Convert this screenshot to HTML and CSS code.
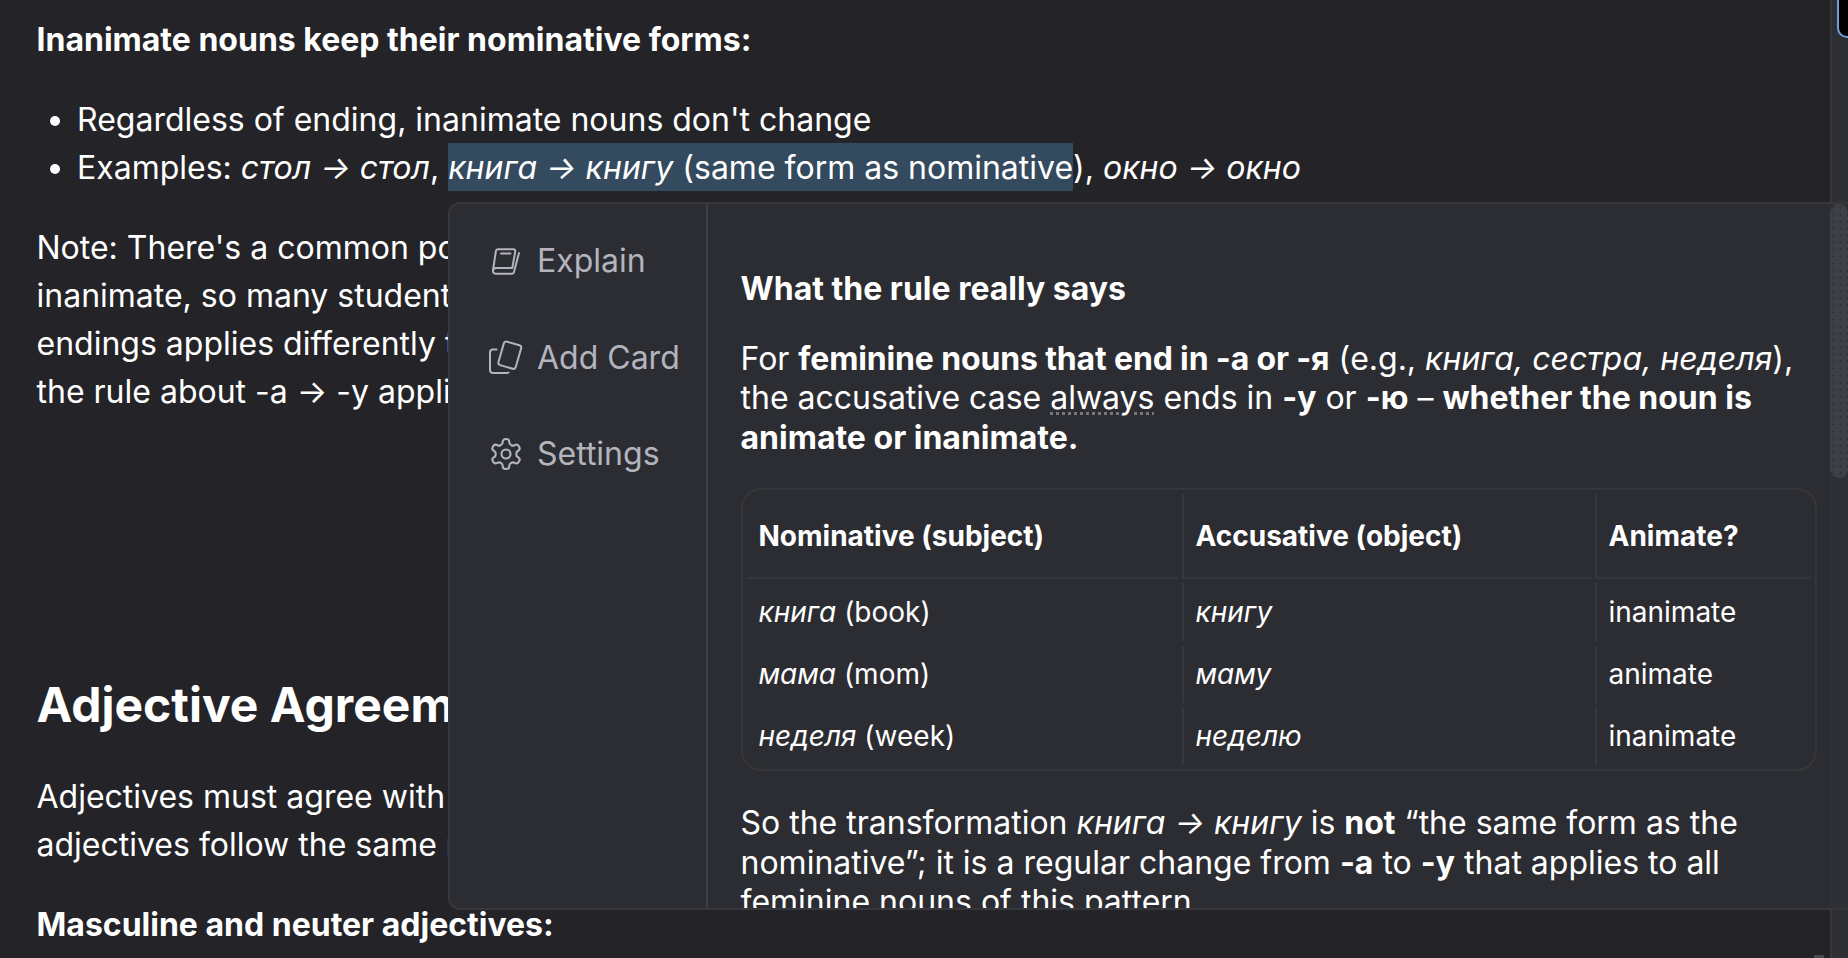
FILE: index.html
```html
<!DOCTYPE html>
<html lang="en">
<head>
<meta charset="UTF-8">
<title>Lesson notes</title>
<link rel="stylesheet" href="styles.css">
</head>
<body>
<div class="page">
    <main class="lesson">
        <p><strong>Inanimate nouns keep their nominative forms:</strong></p>
        <ul>
            <li>Regardless of ending, inanimate nouns don't change</li>
            <li>Examples: <em>стол → стол</em>, <mark><em>книга → книгу</em> (same form as nominative</mark>), <em>окно → окно</em></li>
        </ul>
        <p>Note: There's a common point of<br>inanimate, so many students<br>endings applies differently to<br>the rule about -а → -у applies</p>
        <h2>Adjective Agreement</h2>
        <p>Adjectives must agree with the<br>adjectives follow the same rules</p>
        <p><strong>Masculine and neuter adjectives:</strong></p>
    </main>
    <div class="page-track"><div class="page-thumb"></div></div>
</div>

<section class="popup">
    <nav class="popup-menu">
        <a class="menu-item">
            <svg viewBox="0 0 36 36" width="36" height="36" fill="none" stroke="currentColor" stroke-width="2" stroke-linejoin="round" stroke-linecap="round">
                <path d="M10 6.300h15.500a1.800 1.800 0 0 1 1.800 2.100L24.300 25H8.300a3.300 3.300 0 0 0-3.400 3L7.900 8a2 2 0 0 1 2.100-1.700z"/>
                <path d="M4.900 28a2.800 2.800 0 0 0 2.900 2.700h16.400a1.800 1.800 0 0 0 1.700-1.400L31 10"/>
                <path d="M13 10.500h9.500"/>
            </svg>
            Explain
        </a>
        <a class="menu-item">
            <svg viewBox="0 0 36 36" width="36" height="36" fill="none" stroke="currentColor" stroke-width="2" stroke-linejoin="round" stroke-linecap="round">
                <rect x="12.800" y="3" width="18" height="24.400" rx="2.500" transform="rotate(16 21.800 15.200)"/>
                <path d="M8.500 9.500H5a3 3 0 0 0-3 3V30a3 3 0 0 0 3 3h14a3 3 0 0 0 1.500-.5"/>
            </svg>
            Add Card
        </a>
        <a class="menu-item">
            <svg viewBox="0 0 24 24" width="36" height="36" fill="none" stroke="currentColor" stroke-width="1.400" stroke-linejoin="round" stroke-linecap="round">
                <path d="M12.220 2h-.440a2 2 0 0 0-2 2v.180a2 2 0 0 1-1 1.730l-.430.250a2 2 0 0 1-2 0l-.150-.080a2 2 0 0 0-2.730.730l-.220.380a2 2 0 0 0 .730 2.730l.150.100a2 2 0 0 1 1 1.720v.510a2 2 0 0 1-1 1.740l-.150.090a2 2 0 0 0-.730 2.730l.220.380a2 2 0 0 0 2.730.730l.150-.080a2 2 0 0 1 2 0l.430.250a2 2 0 0 1 1 1.730V20a2 2 0 0 0 2 2h.440a2 2 0 0 0 2-2v-.180a2 2 0 0 1 1-1.730l.430-.250a2 2 0 0 1 2 0l.150.080a2 2 0 0 0 2.730-.730l.220-.390a2 2 0 0 0-.730-2.730l-.150-.080a2 2 0 0 1-1-1.740v-.500a2 2 0 0 1 1-1.740l.150-.090a2 2 0 0 0 .730-2.730l-.220-.380a2 2 0 0 0-2.730-.730l-.150.080a2 2 0 0 1-2 0l-.430-.250a2 2 0 0 1-1-1.730V4a2 2 0 0 0-2-2z"/>
                <circle cx="12" cy="12" r="3"/>
            </svg>
            Settings
        </a>
    </nav>
    <div class="popup-body">
        <h3>What the rule really says</h3>
        <p>For <strong class="tight">feminine nouns that end in -a or -я</strong> (e.g., <em>книга, сестра, неделя</em>), the accusative case <span class="dotted">always</span> ends in <strong>-y</strong> or <strong>-ю</strong> – <strong>whether the noun is animate or inanimate.</strong></p>
        <div class="table-box">
            <table>
                <tr><th>Nominative (subject)</th><th>Accusative (object)</th><th>Animate?</th></tr>
                <tr><td><em>книга</em> (book)</td><td><em>книгу</em></td><td>inanimate</td></tr>
                <tr><td><em>мама</em> (mom)</td><td><em>маму</em></td><td>animate</td></tr>
                <tr><td><em>неделя</em> (week)</td><td><em>неделю</em></td><td>inanimate</td></tr>
            </table>
        </div>
        <p>So the transformation <em>книга → книгу</em> is <strong>not</strong> “the same form as the nominative”; it is a regular change from <strong>-a</strong> to <strong>-y</strong> that applies to all feminine nouns of this pattern.</p>
    </div>
    <div class="popup-track"><div class="popup-thumb"></div></div>
</section>
<div class="corner-mark"></div>
</body>
</html>
```
FILE: styles.css
```css
/* page */
html, body {
    margin: 0;
    height: 100%;
    overflow: hidden;
}
body {
    background-color: #242428;
    color: #fff;
    font-family: Inter, "Noto Sans", sans-serif;
    font-size: 32px;
    line-height: 48px;
    position: relative;
}
.page {
    display: flex;
    height: 958px;
}
.lesson {
    flex: 1;
    min-width: 0;
    padding: 15.500px 37px 0 36.500px;
    overflow: hidden;
    white-space: nowrap;
}
.lesson p {
    margin: 0 0 32px;
}
.lesson ul {
    margin: 0 0 32px;
    padding-left: 40.500px;
}
.lesson h2 {
    font-size: 48px;
    line-height: 72px;
    font-weight: 700;
    margin: 253px 0 32px;
}
mark {
    background-color: #344a5e;
    color: inherit;
    display: inline-block;
    line-height: 46px;
    padding-top: 2px;
    margin-top: -2px;
}
.page-track {
    width: 18px;
    background-color: #2e2f33;
    border-left: 2px solid #36373c;
    box-sizing: border-box;
}
.page-thumb {
    height: 36px;
    margin-left: 5px;
    background-color: #000;
    border-left: 2px solid #6a9fd8;
    border-bottom: 2px solid #6a9fd8;
    border-bottom-left-radius: 10px;
}
.corner-mark {
    position: absolute;
    left: 1814px;
    bottom: 0;
    width: 10px;
    height: 3px;
    background-color: #4a4b52;
}

/* popup over the lesson */
.popup {
    position: absolute;
    left: 448px;
    top: 202px;
    right: 0;
    height: 708px;
    display: flex;
    background-color: #2c2d32;
    border: 2px solid #36373c;
    border-right: none;
    border-radius: 12px 0 0 12px;
    box-sizing: border-box;
    overflow: hidden;
}
.popup-menu {
    width: 258px;
    flex-shrink: 0;
    border-right: 2px solid #3e3f45;
    padding: 9px 0 0 38px;
    box-sizing: border-box;
}
.menu-item {
    display: flex;
    align-items: center;
    gap: 13px;
    height: 96.5px;
    color: #b3b4bd;
}
.popup-body {
    flex: 1;
    min-width: 0;
    padding: 65px 13px 0 32.500px;
    line-height: 39px;
    overflow: hidden;
}
.popup-body h3 {
    font-size: 32px;
    font-weight: 700;
    margin: 0 0 31px;
}
.popup-body p {
    margin: 0 0 31px;
    line-height: 39.400px;
}
.tight {
    letter-spacing: -0.150px;
}
.dotted {
    text-decoration: underline dotted #777;
}
.table-box {
    border: 2px solid #36373c;
    border-radius: 20px;
    margin-bottom: 32px;
}
table {
    width: 100%;
    table-layout: fixed;
    border-collapse: separate;
    border-spacing: 4px;
    font-size: 28px;
}
th, td {
    text-align: left;
    padding: 0 12px;
    border-left: 2px solid #36373c;
}
th:first-child, td:first-child {
    border-left: none;
}
th:nth-child(1) {
    width: 431px;
}
th:nth-child(2) {
    width: 409px;
}
th {
    height: 85px;
    padding-top: 2px;
    border-bottom: 2px solid #36373c;
    box-sizing: border-box;
}
td {
    height: 58px;
    box-sizing: border-box;
}
.popup-track {
    flex-shrink: 0;
    width: 18px;
    background-color: #2f3035;
}
.popup-thumb {
    height: 274px;
    background-color: #3e3f47;
    background-image: radial-gradient(circle, #33343a 1px, transparent 1.200px);
    background-size: 7px 7px;
    border-radius: 10px;
}
```
